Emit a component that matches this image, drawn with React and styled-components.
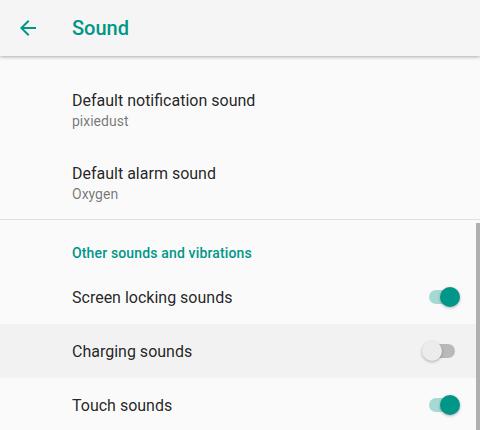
import { useState } from 'react'
import styled, { createGlobalStyle } from 'styled-components'

const GlobalStyle = createGlobalStyle`
  html, body {
    margin: 0;
    padding: 0;
    background: #fafafa;
    font-family: Roboto, 'Liberation Sans', sans-serif;
    overflow: hidden;
  }
`

const TEAL = '#009688'

export default function App() {
  const [toggles, setToggles] = useState({ lock: true, charging: false, touch: true })

  const flip = (key) => setToggles((t) => ({ ...t, [key]: !t[key] }))

  return (
    <Screen>
      <GlobalStyle />
      <AppBar>
        <BackButton aria-label="Back">
          <svg width="24" height="24" viewBox="0 0 24 24">
            <path fill={TEAL} d="M20 11H7.83l5.59-5.59L12 4l-8 8 8 8 1.41-1.41L7.83 13H20v-2z" />
          </svg>
        </BackButton>
        <Title>Sound</Title>
      </AppBar>

      <Content>
        <TopList>
          <Item>
            <ItemTitle>Default notification sound</ItemTitle>
            <ItemSummary>pixiedust</ItemSummary>
          </Item>
          <Item>
            <ItemTitle>Default alarm sound</ItemTitle>
            <ItemSummary>Oxygen</ItemSummary>
          </Item>
        </TopList>

        <Section>
          <Category>Other sounds and vibrations</Category>
          <SwitchRow onClick={() => flip('lock')}>
            <RowLabel>Screen locking sounds</RowLabel>
            <Switch $on={toggles.lock} />
          </SwitchRow>
          <SwitchRow $pressed onClick={() => flip('charging')}>
            <RowLabel>Charging sounds</RowLabel>
            <Switch $on={toggles.charging} />
          </SwitchRow>
          <SwitchRow onClick={() => flip('touch')}>
            <RowLabel>Touch sounds</RowLabel>
            <Switch $on={toggles.touch} />
          </SwitchRow>
          <ScrollThumb />
        </Section>
      </Content>
    </Screen>
  )
}

const Screen = styled.div`
  width: 480px;
  height: 430px;
  overflow: hidden;
  background: #fafafa;
  display: flex;
  flex-direction: column;
`

const AppBar = styled.header`
  height: 56px;
  flex-shrink: 0;
  display: flex;
  align-items: center;
  background: #f5f5f5;
  box-shadow: 0 1px 3px rgba(0, 0, 0, 0.25), 0 2px 4px rgba(0, 0, 0, 0.06);
  position: relative;
  z-index: 1;
`

const BackButton = styled.button`
  width: 24px;
  height: 24px;
  margin: 0 32px 0 16px;
  padding: 0;
  border: none;
  background: none;
  display: flex;
`

const Title = styled.h1`
  margin: 0;
  font-size: 20px;
  font-weight: 500;
  color: ${TEAL};
`

const Content = styled.main`
  flex: 1;
  display: flex;
  flex-direction: column;
`

const TopList = styled.div`
  padding-top: 17px;
  border-bottom: 1px solid #e0e0e0;
`

const Item = styled.div`
  height: 73px;
  padding: 17px 16px 0 72px;
  box-sizing: border-box;
`

const ItemTitle = styled.div`
  font-size: 16px;
  line-height: 21px;
  color: rgba(0, 0, 0, 0.87);
`

const ItemSummary = styled.div`
  font-size: 14px;
  line-height: 20px;
  color: rgba(0, 0, 0, 0.54);
`

const Section = styled.div`
  position: relative;
`

const Category = styled.div`
  padding: 24px 16px 0 72px;
  height: 50px;
  box-sizing: border-box;
  font-size: 14px;
  line-height: 18px;
  font-weight: 500;
  letter-spacing: 0.15px;
  color: ${TEAL};
`

const SwitchRow = styled.div`
  height: 54px;
  display: flex;
  align-items: center;
  justify-content: space-between;
  padding: 0 20px 0 72px;
  background: ${({ $pressed }) => ($pressed ? '#f2f2f2' : 'transparent')};
  cursor: pointer;
`

const RowLabel = styled.div`
  font-size: 16px;
  color: rgba(0, 0, 0, 0.87);
`

const Switch = styled.div`
  position: relative;
  width: 38px;
  height: 20px;

  &::before {
    content: '';
    position: absolute;
    left: 7px;
    right: 5px;
    top: 3px;
    height: 14px;
    border-radius: 7px;
    background: ${({ $on }) => ($on ? '#a7d9d4' : '#b9b9b9')};
  }

  &::after {
    content: '';
    position: absolute;
    top: 0;
    left: ${({ $on }) => ($on ? '18px' : '0')};
    width: 20px;
    height: 20px;
    border-radius: 50%;
    background: ${({ $on }) => ($on ? TEAL : '#ececec')};
    box-shadow: 0 1px 3px rgba(0, 0, 0, 0.3);
  }
`

const ScrollThumb = styled.div`
  position: absolute;
  right: 0;
  top: 3px;
  bottom: 0;
  width: 4px;
  background: #b0b0b0;
`
